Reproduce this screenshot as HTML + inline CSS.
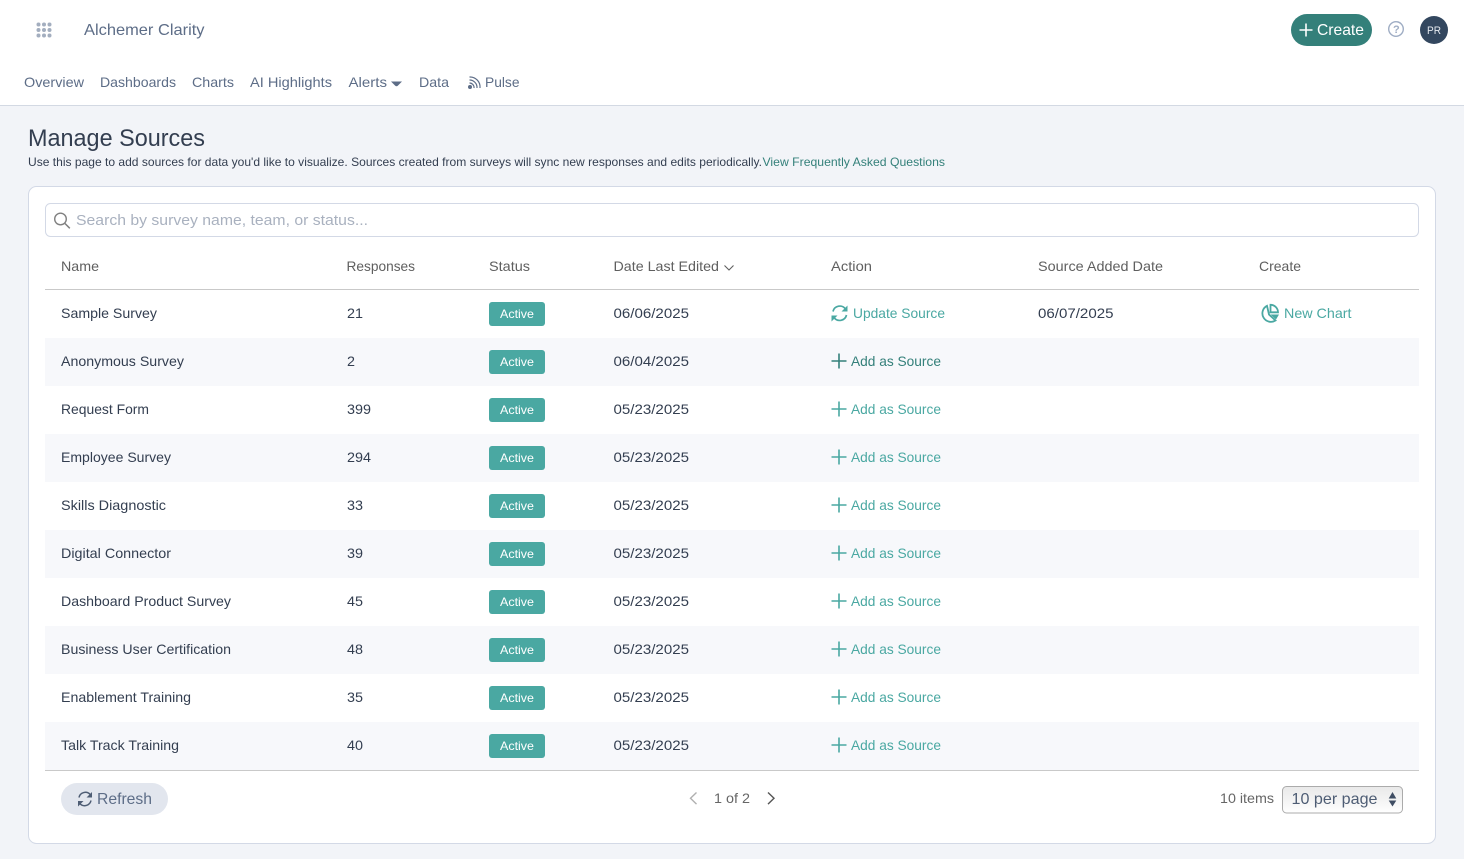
<!DOCTYPE html>
<html lang="en"><head><meta charset="utf-8"><title>Manage Sources</title>
<style>
html,body{margin:0;padding:0;background:#f2f4f8;width:1464px;height:859px;overflow:hidden}
svg{display:block}
text{font-family:"Liberation Sans",sans-serif;font-size:14px}
.nav{fill:#5d6d87}
.h{fill:#5f5f5f}
.t{fill:#333e50}
.b{fill:#fff;font-size:12px}
.a{fill:#4aa8a2}
.ad{fill:#34807a}
.ic{fill:none;stroke:#4aa8a2;stroke-width:1.7}
</style></head><body>
<svg xmlns="http://www.w3.org/2000/svg" width="1464" height="859" viewBox="0 0 1464 859">
<defs><linearGradient id="sel" x1="0" y1="0" x2="0" y2="1"><stop offset="0" stop-color="#e9e9e9"/><stop offset=".5" stop-color="#f3f3f3"/><stop offset="1" stop-color="#fff"/></linearGradient></defs>
<rect width="1464" height="859" fill="#f2f4f8"/>
<rect width="1464" height="105" fill="#fff"/>
<rect y="105" width="1464" height="1" fill="#d3d9e3"/>
<g fill="#a3aebf"><circle cx="38.5" cy="24.5" r="2"/><circle cx="44" cy="24.5" r="2"/><circle cx="49.5" cy="24.5" r="2"/><circle cx="38.5" cy="30" r="2"/><circle cx="44" cy="30" r="2"/><circle cx="49.5" cy="30" r="2"/><circle cx="38.5" cy="35.500" r="2"/><circle cx="44" cy="35.500" r="2"/><circle cx="49.5" cy="35.500" r="2"/></g>
<text class="nav" x="84" y="35" style="font-size:16px" textLength="120.5" lengthAdjust="spacingAndGlyphs">Alchemer Clarity</text>
<text class="nav" x="24" y="87" textLength="60" lengthAdjust="spacingAndGlyphs">Overview</text>
<text class="nav" x="100" y="87" textLength="76" lengthAdjust="spacingAndGlyphs">Dashboards</text>
<text class="nav" x="192" y="87" textLength="42" lengthAdjust="spacingAndGlyphs">Charts</text>
<text class="nav" x="250" y="87" textLength="82" lengthAdjust="spacingAndGlyphs">AI Highlights</text>
<text class="nav" x="348.5" y="87" textLength="38.5" lengthAdjust="spacingAndGlyphs">Alerts</text>
<path d="M391 81.500h11l-4 4q-1.500 1.500-3 0z" fill="#5d6d87"/>
<text class="nav" x="419" y="87" textLength="30" lengthAdjust="spacingAndGlyphs">Data</text>
<g fill="none" stroke="#5d6d87" stroke-width="1.200"><path d="M469.500 77a10 10 0 0 1 10.500 11"/><path d="M469.500 80a7.500 7.500 0 0 1 7.500 8"/><path d="M469.500 83a4.500 4.500 0 0 1 4.500 5"/></g><circle cx="470" cy="87" r="2" fill="#5d6d87"/>
<text class="nav" x="485" y="87" textLength="34.5" lengthAdjust="spacingAndGlyphs">Pulse</text>

<rect x="1291" y="14" width="81" height="32" rx="16" fill="#34807a"/>
<path d="M1306 23.500v13M1299.500 30h13" stroke="#fff" stroke-width="1.600" fill="none"/>
<text x="1317" y="35" style="font-size:16px;fill:#fff" textLength="47" lengthAdjust="spacingAndGlyphs">Create</text>
<circle cx="1396" cy="29" r="7.300" fill="none" stroke="#9fadc4" stroke-width="1.400"/>
<text x="1393" y="33" style="font-size:11px;font-weight:bold;fill:#9fadc4">?</text>
<circle cx="1434" cy="30" r="14" fill="#33475f"/>
<text x="1427" y="34" style="font-size:11px;fill:#e6eaf0" textLength="14" lengthAdjust="spacingAndGlyphs">PR</text>

<text x="28" y="146" style="font-size:24px;fill:#333e50" textLength="177" lengthAdjust="spacingAndGlyphs">Manage Sources</text>
<text x="28" y="166" style="font-size:12px;fill:#333e50" textLength="734" lengthAdjust="spacingAndGlyphs">Use this page to add sources for data you'd like to visualize. Sources created from surveys will sync new responses and edits periodically.</text>
<text x="762.5" y="166" style="font-size:12px;fill:#34807a" textLength="182.5" lengthAdjust="spacingAndGlyphs">View Frequently Asked Questions</text>

<rect x="28.5" y="186.5" width="1407" height="657" rx="8" fill="#fff" stroke="#d3d9e6"/>
<rect x="45.5" y="203.5" width="1373" height="33" rx="5" fill="#fff" stroke="#d3d9e6"/>
<circle cx="60.5" cy="219" r="5.800" fill="none" stroke="#808080" stroke-width="1.400"/><path d="M65 223.500l4.800 4.800" stroke="#808080" stroke-width="1.500" fill="none"/>
<text x="76" y="225" style="font-size:15px;fill:#a9b1bf" textLength="292" lengthAdjust="spacingAndGlyphs">Search by survey name, team, or status...</text>

<text class="h" x="61" y="271" textLength="38" lengthAdjust="spacingAndGlyphs">Name</text>
<text class="h" x="346.5" y="271" textLength="68.5" lengthAdjust="spacingAndGlyphs">Responses</text>
<text class="h" x="489" y="271" textLength="41" lengthAdjust="spacingAndGlyphs">Status</text>
<text class="h" x="613.5" y="271" textLength="105.5" lengthAdjust="spacingAndGlyphs">Date Last Edited</text>
<path d="M724.5 265.500l4.500 4.500 4.500-4.500" fill="none" stroke="#5f5f5f" stroke-width="1.100"/>
<text class="h" x="831" y="271" textLength="41" lengthAdjust="spacingAndGlyphs">Action</text>
<text class="h" x="1038" y="271" textLength="125" lengthAdjust="spacingAndGlyphs">Source Added Date</text>
<text class="h" x="1259" y="271" textLength="42" lengthAdjust="spacingAndGlyphs">Create</text>
<rect x="45" y="289" width="1374" height="1" fill="#c9c9c9"/>

<g fill="#f7f8fb"><rect x="45" y="338" width="1374" height="48"/><rect x="45" y="434" width="1374" height="48"/><rect x="45" y="530" width="1374" height="48"/><rect x="45" y="626" width="1374" height="48"/><rect x="45" y="722" width="1374" height="48"/></g>
<rect x="45" y="770" width="1374" height="1" fill="#c9c9c9"/>

<g fill="#4aa8a2"><rect x="489" y="302" width="56" height="24" rx="3"/><rect x="489" y="350" width="56" height="24" rx="3"/><rect x="489" y="398" width="56" height="24" rx="3"/><rect x="489" y="446" width="56" height="24" rx="3"/><rect x="489" y="494" width="56" height="24" rx="3"/><rect x="489" y="542" width="56" height="24" rx="3"/><rect x="489" y="590" width="56" height="24" rx="3"/><rect x="489" y="638" width="56" height="24" rx="3"/><rect x="489" y="686" width="56" height="24" rx="3"/><rect x="489" y="734" width="56" height="24" rx="3"/></g>

<!-- row 1 -->
<text class="t" x="61" y="318" textLength="96" lengthAdjust="spacingAndGlyphs">Sample Survey</text>
<text class="t" x="347" y="318" textLength="16" lengthAdjust="spacingAndGlyphs">21</text>
<text class="b" x="500" y="318" textLength="34" lengthAdjust="spacingAndGlyphs">Active</text>
<text class="t" x="613.5" y="318" textLength="75.5" lengthAdjust="spacingAndGlyphs">06/06/2025</text>
<g class="ic"><path d="M833 311.500a7 7 0 0 1 12.500-2.500"/><path d="M846.500 315a7 7 0 0 1-12.500 2.500"/></g>
<path d="M847.500 305.500v6h-6zM831.500 321.500v-6h6z" fill="#4aa8a2"/>
<text class="a" x="853" y="318" textLength="92" lengthAdjust="spacingAndGlyphs">Update Source</text>
<text class="t" x="1038" y="318" textLength="75.5" lengthAdjust="spacingAndGlyphs">06/07/2025</text>
<g fill="none" stroke="#4aa8a2" stroke-width="1.800"><path d="M1267 305.800a8.500 8.500 0 1 0 8.500 14.700l-6.500-6z"/><path d="M1270.500 304.800a7.500 7.500 0 0 1 7.500 7.500h-7.500z"/></g><path d="M1270.500 314.500h8.500l-3 5z" fill="#4aa8a2"/>
<text class="a" x="1284" y="318" textLength="67.5" lengthAdjust="spacingAndGlyphs">New Chart</text>

<!-- row 2 -->
<text class="t" x="61" y="366" textLength="123" lengthAdjust="spacingAndGlyphs">Anonymous Survey</text>
<text class="t" x="347" y="366" textLength="8" lengthAdjust="spacingAndGlyphs">2</text>
<text class="b" x="500" y="366" textLength="34" lengthAdjust="spacingAndGlyphs">Active</text>
<text class="t" x="613.5" y="366" textLength="75.5" lengthAdjust="spacingAndGlyphs">06/04/2025</text>
<path d="M839 353.500v15M831.500 361h15" stroke="#34807a" stroke-width="1.600" fill="none"/>
<text class="ad" x="851" y="366" textLength="90" lengthAdjust="spacingAndGlyphs">Add as Source</text>

<!-- row 3 -->
<text class="t" x="61" y="414" textLength="88" lengthAdjust="spacingAndGlyphs">Request Form</text>
<text class="t" x="347" y="414" textLength="24" lengthAdjust="spacingAndGlyphs">399</text>
<text class="b" x="500" y="414" textLength="34" lengthAdjust="spacingAndGlyphs">Active</text>
<text class="t" x="613.5" y="414" textLength="75.5" lengthAdjust="spacingAndGlyphs">05/23/2025</text>
<path d="M839 401.500v15M831.500 409h15" stroke="#4aa8a2" stroke-width="1.600" fill="none"/>
<text class="a" x="851" y="414" textLength="90" lengthAdjust="spacingAndGlyphs">Add as Source</text>

<!-- row 4 -->
<text class="t" x="61" y="462" textLength="110" lengthAdjust="spacingAndGlyphs">Employee Survey</text>
<text class="t" x="347" y="462" textLength="24" lengthAdjust="spacingAndGlyphs">294</text>
<text class="b" x="500" y="462" textLength="34" lengthAdjust="spacingAndGlyphs">Active</text>
<text class="t" x="613.5" y="462" textLength="75.5" lengthAdjust="spacingAndGlyphs">05/23/2025</text>
<path d="M839 449.500v15M831.500 457h15" stroke="#4aa8a2" stroke-width="1.600" fill="none"/>
<text class="a" x="851" y="462" textLength="90" lengthAdjust="spacingAndGlyphs">Add as Source</text>

<!-- row 5 -->
<text class="t" x="61" y="510" textLength="105" lengthAdjust="spacingAndGlyphs">Skills Diagnostic</text>
<text class="t" x="347" y="510" textLength="16" lengthAdjust="spacingAndGlyphs">33</text>
<text class="b" x="500" y="510" textLength="34" lengthAdjust="spacingAndGlyphs">Active</text>
<text class="t" x="613.5" y="510" textLength="75.5" lengthAdjust="spacingAndGlyphs">05/23/2025</text>
<path d="M839 497.500v15M831.500 505h15" stroke="#4aa8a2" stroke-width="1.600" fill="none"/>
<text class="a" x="851" y="510" textLength="90" lengthAdjust="spacingAndGlyphs">Add as Source</text>

<!-- row 6 -->
<text class="t" x="61" y="558" textLength="110" lengthAdjust="spacingAndGlyphs">Digital Connector</text>
<text class="t" x="347" y="558" textLength="16" lengthAdjust="spacingAndGlyphs">39</text>
<text class="b" x="500" y="558" textLength="34" lengthAdjust="spacingAndGlyphs">Active</text>
<text class="t" x="613.5" y="558" textLength="75.5" lengthAdjust="spacingAndGlyphs">05/23/2025</text>
<path d="M839 545.500v15M831.500 553h15" stroke="#4aa8a2" stroke-width="1.600" fill="none"/>
<text class="a" x="851" y="558" textLength="90" lengthAdjust="spacingAndGlyphs">Add as Source</text>

<!-- row 7 -->
<text class="t" x="61" y="606" textLength="170" lengthAdjust="spacingAndGlyphs">Dashboard Product Survey</text>
<text class="t" x="347" y="606" textLength="16" lengthAdjust="spacingAndGlyphs">45</text>
<text class="b" x="500" y="606" textLength="34" lengthAdjust="spacingAndGlyphs">Active</text>
<text class="t" x="613.5" y="606" textLength="75.5" lengthAdjust="spacingAndGlyphs">05/23/2025</text>
<path d="M839 593.500v15M831.500 601h15" stroke="#4aa8a2" stroke-width="1.600" fill="none"/>
<text class="a" x="851" y="606" textLength="90" lengthAdjust="spacingAndGlyphs">Add as Source</text>

<!-- row 8 -->
<text class="t" x="61" y="654" textLength="170" lengthAdjust="spacingAndGlyphs">Business User Certification</text>
<text class="t" x="347" y="654" textLength="16" lengthAdjust="spacingAndGlyphs">48</text>
<text class="b" x="500" y="654" textLength="34" lengthAdjust="spacingAndGlyphs">Active</text>
<text class="t" x="613.5" y="654" textLength="75.5" lengthAdjust="spacingAndGlyphs">05/23/2025</text>
<path d="M839 641.500v15M831.500 649h15" stroke="#4aa8a2" stroke-width="1.600" fill="none"/>
<text class="a" x="851" y="654" textLength="90" lengthAdjust="spacingAndGlyphs">Add as Source</text>

<!-- row 9 -->
<text class="t" x="61" y="702" textLength="130" lengthAdjust="spacingAndGlyphs">Enablement Training</text>
<text class="t" x="347" y="702" textLength="16" lengthAdjust="spacingAndGlyphs">35</text>
<text class="b" x="500" y="702" textLength="34" lengthAdjust="spacingAndGlyphs">Active</text>
<text class="t" x="613.5" y="702" textLength="75.5" lengthAdjust="spacingAndGlyphs">05/23/2025</text>
<path d="M839 689.500v15M831.500 697h15" stroke="#4aa8a2" stroke-width="1.600" fill="none"/>
<text class="a" x="851" y="702" textLength="90" lengthAdjust="spacingAndGlyphs">Add as Source</text>

<!-- row 10 -->
<text class="t" x="61" y="750" textLength="118" lengthAdjust="spacingAndGlyphs">Talk Track Training</text>
<text class="t" x="347" y="750" textLength="16" lengthAdjust="spacingAndGlyphs">40</text>
<text class="b" x="500" y="750" textLength="34" lengthAdjust="spacingAndGlyphs">Active</text>
<text class="t" x="613.5" y="750" textLength="75.5" lengthAdjust="spacingAndGlyphs">05/23/2025</text>
<path d="M839 737.500v15M831.500 745h15" stroke="#4aa8a2" stroke-width="1.600" fill="none"/>
<text class="a" x="851" y="750" textLength="90" lengthAdjust="spacingAndGlyphs">Add as Source</text>

<!-- footer -->
<rect x="61" y="783" width="107" height="32" rx="16" fill="#e2e6ee"/>
<g fill="none" stroke="#4e5d74" stroke-width="1.500"><path d="M79 797.500a6.500 6.500 0 0 1 11.200-3"/><path d="M91 800.500a6.500 6.500 0 0 1-11.200 3"/></g>
<path d="M92 792v5.500h-5.500zM78 806.500v-5.500h5.500z" fill="#4e5d74"/>
<text x="97" y="804" style="font-size:16px;fill:#5d6d87" textLength="55" lengthAdjust="spacingAndGlyphs">Refresh</text>
<path d="M696.500 792.500l-6 5.800 6 5.800" fill="none" stroke="#b0b0b0" stroke-width="1.400"/>
<text x="714" y="803" style="fill:#666" textLength="36" lengthAdjust="spacingAndGlyphs">1 of 2</text>
<path d="M768 792.500l6 5.800-6 5.800" fill="none" stroke="#555" stroke-width="1.400"/>
<text x="1220" y="803" style="fill:#666" textLength="54" lengthAdjust="spacingAndGlyphs">10 items</text>
<rect x="1282.5" y="786.5" width="120" height="26.500" rx="4" fill="url(#sel)" stroke="#ababab"/>
<text x="1291.5" y="804" style="font-size:16px;fill:#4e5d74" textLength="86" lengthAdjust="spacingAndGlyphs">10 per page</text>
<path d="M1392.500 792l3.800 6.500h-7.600zM1392.500 806.500l-3.800-6h7.600z" fill="#3f4d63"/>
</svg>
</body></html>
